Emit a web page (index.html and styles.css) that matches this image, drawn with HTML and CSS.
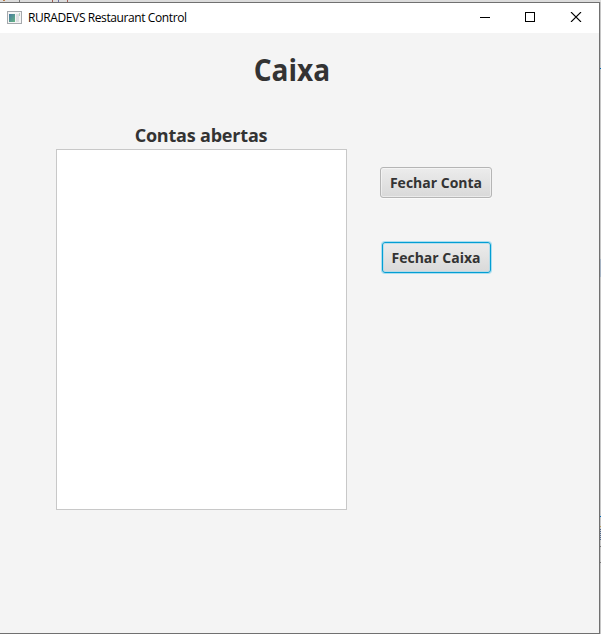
FILE: index.html
```html
<!DOCTYPE html>
<html lang="pt-BR">
<head>
<meta charset="utf-8">
<title>RURADEVS Restaurant Control</title>
<link rel="stylesheet" href="styles.css">
</head>
<body>
<div class="window">
  <header class="titlebar">
    <svg class="app-icon" width="15" height="13" viewBox="0 0 15 13">
      <defs><linearGradient id="pane" x1="0" y1="0" x2="1" y2="1"><stop offset="0" stop-color="#4779a0"/><stop offset="1" stop-color="#65b583"/></linearGradient></defs>
      <rect x=".5" y=".5" width="14" height="12" fill="#f5f5f5" stroke="#a5a9ad"/>
      <rect x="2" y="3" width="6" height="8" fill="url(#pane)"/>
      <rect x="9" y="3" width="3" height="8" fill="#dedfe2"/>
      <rect x="12" y="2" width="1" height="3" fill="#b5d3bf"/>
    </svg>
    <span class="app-title">RURADEVS Restaurant Control</span>
    <svg class="controls" width="102" height="10" viewBox="0 0 102 10" fill="none" stroke="#000">
      <path d="M0 5.5H10M45.500 .5h9v9h-9z" shape-rendering="crispEdges"/>
      <path d="M91 0l10 10M101 0L91 10" stroke-width="1.1"/>
    </svg>
  </header>
  <main class="content">
    <h1 class="heading"><span>Caixa</span></h1>
    <div class="columns">
      <section class="accounts">
        <h2 class="list-title"><span>Contas abertas</span></h2>
        <div class="list"></div>
      </section>
      <div class="actions">
        <button class="btn btn-account"><span>Fechar Conta</span></button>
        <button class="btn btn-register"><span>Fechar Caixa</span></button>
      </div>
    </div>
  </main>
</div>
</body>
</html>
```
FILE: styles.css
```css
* { box-sizing: border-box; }
body {
  margin: 0;
  height: 634px;
  padding-top: 2px;
  overflow: hidden;
  font-family: "Open Sans", "Noto Sans", sans-serif;
  color: #333;
  background:
    linear-gradient(#0068b5, #0068b5) 600px 68px / 1px 1px no-repeat,
    linear-gradient(#a4b2c2, #a4b2c2) 600px 259px / 1px 18px no-repeat,
    linear-gradient(#0068b5, #0068b5) 600px 516px / 1px 1px no-repeat,
    linear-gradient(#b89b5e, #b89b5e) 600px 526px / 1px 1px no-repeat,
    repeating-linear-gradient(#53698a 0 1px, #c3c6ca 1px 2px) 600px 529px / 1px 11px no-repeat,
    linear-gradient(#777, #777) 600px 546px / 1px 1px no-repeat,
    linear-gradient(#777, #777) 600px 562px / 1px 1px no-repeat,
    linear-gradient(#b77a47, #b77a47) 3px 0 / 2px 1px no-repeat,
    linear-gradient(#777, #777) 19px 0 / 1px 2px no-repeat,
    linear-gradient(#a05a50, #a05a50) 52px 0 / 1px 2px no-repeat,
    linear-gradient(#6b6fa8, #6b6fa8) 58px 0 / 1px 2px no-repeat,
    linear-gradient(#a05a50, #a05a50) 67px 0 / 1px 2px no-repeat,
    linear-gradient(#dcdcdc, #dcdcdc) 0 0 / 601px 2px no-repeat,
    #c6c6c6;
}
.window {
  width: 600px;
  height: 632px;
  border: 1px solid #707070;
  border-left: 0;
  background: #f4f4f4;
}
.titlebar {
  display: flex;
  align-items: center;
  height: 30px;
  padding: 0 17px 0 7px;
  background: #fff;
}
.app-icon { margin-right: 6px; margin-top: -2px; }
.app-title {
  color: #000;
  font-size: 12px;
  line-height: 16px;
  white-space: nowrap;
  letter-spacing: -.4px;
}
.controls { margin-left: auto; margin-top: -2px; }
h1, h2 { margin: 0; font-weight: 700; white-space: nowrap; text-align: center; }
.heading {
  width: 584px;
  height: 89px;
  padding-top: 17px;
  font-size: 30px;
  line-height: 40px;
}
.heading span { display: inline-block; transform: scaleX(.935); }
.columns { display: flex; gap: 33px; padding-left: 56px; }
.accounts { width: 291px; }
.list-title { height: 27px; padding-right: 1px; font-size: 18px; line-height: 26px; letter-spacing: -.2px; }
.list { height: 361px; background: #fff; border: 1px solid #c8c8c8; }
.actions {
  display: flex;
  flex-direction: column;
  align-items: center;
  gap: 44px;
  width: 112px;
  padding-top: 45px;
}
.btn {
  display: flex;
  align-items: center;
  justify-content: center;
  height: 31px;
  padding: 0;
  border: 1px solid #b5b5b5;
  border-radius: 3px;
  background: linear-gradient(#ececec, #d9d9d9);
  box-shadow: inset 0 0 0 1px rgba(255, 255, 255, .45), 0 1px 0 #fafafa;
  color: #333;
  font: 700 14px/20px "Open Sans", "Noto Sans", sans-serif;
  white-space: nowrap;
}
.btn-account { width: 112px; }
.btn-register {
  width: 109px;
  border-color: #039ed3;
  box-shadow: inset 0 0 0 1px rgba(170, 218, 235, .75), 0 0 0 1px #a9def0;
}
```
